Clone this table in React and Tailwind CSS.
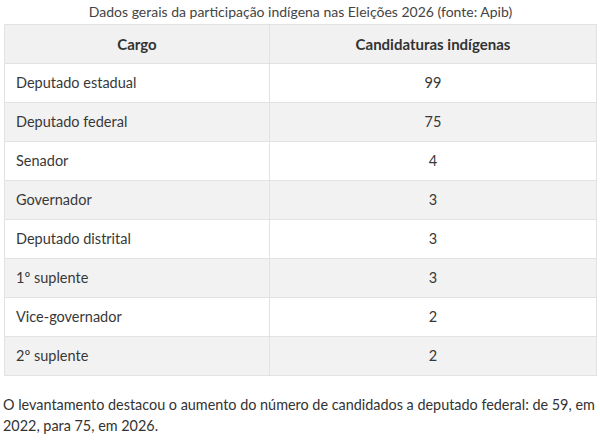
const rows = [
  ['Deputado estadual', '99'],
  ['Deputado federal', '75'],
  ['Senador', '4'],
  ['Governador', '3'],
  ['Deputado distrital', '3'],
  ['1º suplente', '3'],
  ['Vice-governador', '2'],
  ['2º suplente', '2'],
];

export default function App() {
  return (
    <div className="w-[600px] h-[440px] bg-white text-[#383838] font-['Lato','Liberation_Sans',sans-serif] overflow-hidden">
      <div className="pl-[4px] pr-[3px]">
        <table className="w-full border-collapse table-fixed">
          <caption className="text-[14px] leading-[24px] text-[#444] text-center">
            Dados gerais da participação indígena nas Eleições 2026 (fonte: Apib)
          </caption>
          <thead>
            <tr className="bg-[#f1f1f1] h-[39px]">
              <th className="w-[265px] border border-[#e2e2e2] text-[15px] font-bold text-[#333]">Cargo</th>
              <th className="border border-[#e2e2e2] text-[15px] font-bold text-[#333]">Candidaturas indígenas</th>
            </tr>
          </thead>
          <tbody>
            {rows.map(([cargo, n], i) => (
              <tr key={cargo} className={`h-[39px] ${i % 2 === 1 ? 'bg-[#f2f2f2]' : 'bg-white'}`}>
                <td className="border border-[#e2e2e2] px-[11px] text-[14.5px]">{cargo}</td>
                <td className="border border-[#e2e2e2] text-center text-[14.5px]">{n}</td>
              </tr>
            ))}
          </tbody>
        </table>
      </div>
      <p className="mt-[18px] pl-[3px] pr-[2px] text-[14.4px] leading-[21px] text-[#333]">
        O levantamento destacou o aumento do número de candidados a deputado federal: de 59, em 2022, para 75, em 2026.
      </p>
    </div>
  );
}
